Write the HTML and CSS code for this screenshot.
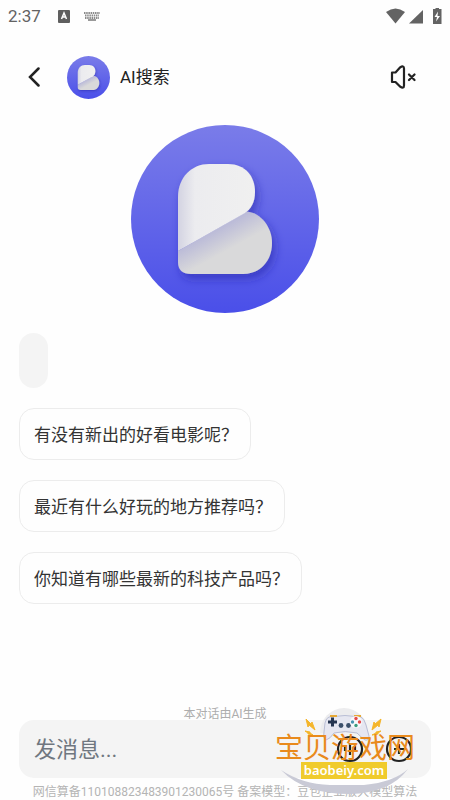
FILE: index.html
```html
<!DOCTYPE html>
<html lang="zh-CN">
<head>
<meta charset="utf-8">
<meta name="viewport" content="width=device-width, initial-scale=1">
<title>AI搜索</title>
<link rel="stylesheet" href="styles.css">
</head>
<body>
<svg class="defs" aria-hidden="true">
  <defs>
    <linearGradient id="disc" x1="0" y1="0" x2="0" y2="1"><stop offset="0" stop-color="#7a7ce9"/><stop offset="1" stop-color="#4a4fe9"/></linearGradient>
    <linearGradient id="top" x1="0" y1="0" x2="1" y2="0"><stop offset="0" stop-color="#d3d3e2"/><stop offset=".22" stop-color="#ececef"/><stop offset="1" stop-color="#f0f0f0"/></linearGradient>
    <linearGradient id="bottom" x1="76" y1="108" x2="88" y2="130" gradientUnits="userSpaceOnUse"><stop offset="0" stop-color="#b9b9d8"/><stop offset="1" stop-color="#d9d9da"/></linearGradient>
    <filter id="shade" x="-30%" y="-30%" width="160%" height="160%"><feDropShadow dx="3" dy="5" stdDeviation="5" flood-color="#2424a0" flood-opacity=".5"/></filter>
    <symbol id="logo" viewBox="0 0 188 188">
      <circle cx="94" cy="94" r="94" fill="url(#disc)"/>
      <g filter="url(#shade)">
        <path d="M47 126 116 86.500C130 88 141 102 141 118C141 136 129 149 112 149H60Q47 149 47 137Z" fill="url(#bottom)"/>
        <path d="M47 126V72C47 52 61 39 78 39H97C114 39 124 51 124 67C124 77 120 84 114 88Z" fill="url(#top)"/>
      </g>
    </symbol>
  </defs>
</svg>
<div class="app">
  <div class="status">
    <span class="time">2:37</span>
    <svg class="badge" viewBox="0 0 12 13" width="12" height="13"><rect width="12" height="13" rx="1" fill="#5f5f5f"/><path d="M3.500 9 6 3 8.500 9M4.500 7h3" fill="none" stroke="#fff" stroke-width="1.500"/></svg>
    <svg class="keys" viewBox="0 0 16 9" width="16" height="9"><path d="M0 1h16M1 3.500h14M1 6h14" stroke="#8a8a8a" stroke-width="2" stroke-dasharray="1.500 .7"/><path d="M4 8h8" stroke="#777" stroke-width="1.500"/></svg>
    <span class="spacer"></span>
    <svg viewBox="0 0 56 17" width="58" height="17" fill="#636363"><path d="M0 4Q9.500 -3 19 4L9.500 15.500Z"/><path d="M37 2V15.500H23Z"/><path d="M49.500 1V0h3.500v1h2.500v15H47V1Z"/><path d="M52 3.500 48.500 9H51L50 13.500 54 8h-2.500Z" fill="#fff"/></svg>
  </div>
  <header class="header">
    <button class="icon" aria-label="返回"><svg viewBox="0 0 12 20" width="12" height="20"><path d="M10.500 1.500 2 10l8.500 8.500" fill="none" stroke="#222" stroke-width="2.500" stroke-linecap="round"/></svg></button>
    <svg class="avatar"><use href="#logo"/></svg>
    <h1>AI搜索</h1>
    <button class="icon" aria-label="静音"><svg viewBox="0 0 26 24" width="26" height="24" fill="none" stroke="#222" stroke-width="2.200" stroke-linejoin="round"><path d="M2 7.500h3.500L10 2.500Q14 0 14 3.500v17Q14 24 10 21.500L5.500 17H2Z"/><path d="m19 9.500 5.500 5.500M24.500 9.500 19 15" stroke-linecap="round"/></svg></button>
  </header>
  <main class="chat">
    <svg class="hero"><use href="#logo"/></svg>
    <div class="bubble"></div>
    <button class="chip">有没有新出的好看电影呢？</button>
    <button class="chip">最近有什么好玩的地方推荐吗？</button>
    <button class="chip">你知道有哪些最新的科技产品吗？</button>
  </main>
  <footer class="footer">
    <p class="note">本对话由AI生成</p>
    <div class="composer">
      <input type="text" placeholder="发消息..." aria-label="发消息">
      <button class="round" aria-label="语音"><svg viewBox="0 0 28 28" width="28" height="28" fill="none" stroke="#222" stroke-width="2.200"><circle cx="14" cy="14" r="12"/><path d="M9 12v4M14 8v12M19 11v6"/></svg></button>
      <button class="round" aria-label="更多"><svg viewBox="0 0 28 28" width="28" height="28" fill="none" stroke="#222" stroke-width="2.200"><circle cx="14" cy="14" r="12"/><path d="M14 9v10M9 14h10"/></svg></button>
    </div>
    <p class="legal">网信算备110108823483901230065号 备案模型：豆包企业版大模型算法</p>
    <div class="mark">
      <svg class="art" viewBox="0 0 140 94" width="140" height="94">
        <path d="M46 27A24 25 0 0 1 94 27Z" fill="#ececee"/>
        <path d="M7 64Q28 78 56 79H90Q120 76 134 63Q116 87 76 88Q30 88 7 64Z" fill="#c9cad6"/>
        <path d="M55 11Q71 8 87 11Q90 12 92 19L95 30Q95 35 91 34Q88 32 83 27Q71 24 60 27Q56 33 52 34Q49 33 50 26L51 17Q52 12 55 11Z" fill="#e6e7f1" stroke="#b9bed5" stroke-width="1"/>
        <path d="M56 10h7M80 10h7" stroke="#e6a937" stroke-width="2"/>
        <path d="M54 16h9M58.500 11.500v9" stroke="#253550" stroke-width="3"/>
        <circle cx="67" cy="19.500" r="2.400" fill="#3c506b"/><circle cx="74.500" cy="19.500" r="2.400" fill="#3c506b"/>
        <circle cx="82" cy="16" r="6" fill="#f8f8fc"/>
        <circle cx="82" cy="12.500" r="1.700" fill="#e54949"/><circle cx="78.500" cy="16" r="1.700" fill="#4a94b3"/><circle cx="85.500" cy="16" r="1.700" fill="#e54949"/><circle cx="82" cy="19.500" r="1.700" fill="#3b9c80"/>
        <path d="m32 13 5 5 1-2 3 8-6-5-1 2ZM31 25l5 1v1l3 2-5-1v-1ZM107 13l-6 5-1-2-2 8 6-5 1 2ZM107 25l-5 1v1l-4 2 6-1v-1Z" fill="#f4b52a" stroke="#f4b52a"/>
      </svg>
      <span class="name">宝贝游戏网</span>
      <span class="site">baobeiy.com</span>
    </div>
  </footer>
</div>
</body>
</html>
```
FILE: styles.css
```css
* { box-sizing: border-box; }
body { margin: 0; background: #fefefe; color: #222; font-family: Roboto, "Noto Sans CJK SC", sans-serif; }
button { border: 0; padding: 0; background: none; font: inherit; color: inherit; }
h1, p { margin: 0; font-weight: 400; }
svg { display: block; flex: none; }
.defs { position: absolute; width: 0; height: 0; }
.app { min-height: 100vh; display: flex; flex-direction: column; }
.status { height: 32px; padding: 0 7px 0 8px; display: flex; align-items: center; color: #636363; }
.time { font-size: 17px; line-height: 32px; }
.badge { margin-left: 17px; }
.keys { margin-left: 14px; }
.spacer { flex: 1; }
.header { height: 90px; padding: 0 31px 0 24px; display: flex; align-items: center; }
.icon { width: 32px; height: 40px; display: grid; place-items: center; }
.icon:first-child { width: 20px; }
.avatar { width: 43px; height: 43px; margin: 0 10px 0 23px; }
.header h1 { flex: 1; font-size: 17px; line-height: 24px; }
.chat { flex: 1; padding: 3px 19px 0; display: flex; flex-direction: column; align-items: flex-start; gap: 20px; }
.hero { width: 188px; height: 188px; align-self: center; }
.bubble { width: 29px; height: 55px; border-radius: 15px; background: #f4f4f4; }
.chip { height: 52px; padding: 0 12px 2px 14px; border: 1px solid #ececec; border-radius: 15px; font-size: 17px; color: #333; }
.footer { position: relative; padding: 0 19px; }
.note { text-align: center; font-size: 12px; line-height: 12px; color: #adadad; }
.composer { height: 58px; padding: 0 18px 0 15px; display: flex; align-items: center; gap: 21px; border-radius: 15px; background: #f4f4f4; }
.composer input { flex: 1; min-width: 0; padding: 0; border: 0; outline: 0; background: none; font: inherit; font-size: 22px; }
.composer input::placeholder { color: #6f7780; opacity: 1; }
.legal { padding-top: 6px; text-align: center; font-size: 12px; line-height: 16px; color: #b4b4b4; white-space: nowrap; }
.mark { position: absolute; right: 36px; bottom: 0; width: 140px; height: 94px; pointer-events: none; }
.art { position: absolute; left: 0; top: 0; }
.name { position: absolute; left: 1px; top: 29px; font-size: 28px; line-height: 28px; color: #e98a1c; white-space: nowrap; }
.site { position: absolute; left: 27px; top: 56px; width: 86px; background: #f0cb2c; color: #fff; font: 600 13px/17px "Noto Sans", sans-serif; text-align: center; }
```
